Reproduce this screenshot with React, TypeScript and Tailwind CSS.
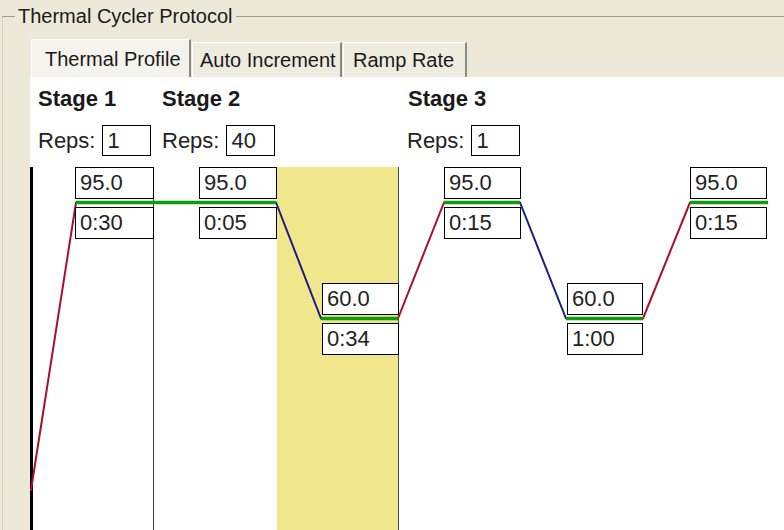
import React from "react";

const GREEN = "#0E9C0E";
const RED = "#A8102C";
const BLUE = "#1C1C86";

type BoxProps = { left: number; top: number; width: number; text: string };

function ValBox({ left, top, width, text }: BoxProps) {
  return (
    <div
      className="absolute h-[32px] border border-black bg-white pl-[4px] text-[22px] leading-[30px] text-[#222]"
      style={{ left, top, width }}
    >
      {text}
    </div>
  );
}

function RepsRow({ value }: { value: string }) {
  return (
    <div className="mt-[14px] flex h-[31px] items-center gap-[7px]">
      <span className="text-[22px] leading-[31px] text-[#222]">Reps:</span>
      <div className="h-[31px] w-[49px] border border-black bg-white pl-[4px] text-[22px] leading-[29px] text-[#222]">
        {value}
      </div>
    </div>
  );
}

export default function App() {
  const upper = 35.5;
  const lower = 151.5;
  return (
    <div className="h-[530px] w-[784px] overflow-hidden bg-[#ECE9D8] font-['Liberation_Sans',Arial,sans-serif] text-[#1a1a1a]">
      {/* group box header */}
      <div className="flex h-[32px] items-start">
        <div className="mt-[16px] ml-[2px] h-[16px] w-[13px] border-t border-l border-t-[#9E9D92] border-l-[#CFCDC0]" />
        <span className="px-[3px] text-[20px] leading-[32px] text-[#1a1a1a]">Thermal Cycler Protocol</span>
        <div className="mt-[16px] flex-1 border-t border-t-[#9E9D92]" />
      </div>

      {/* group box body */}
      <div className="ml-[2px] flex h-[498px] flex-col border-l border-l-[#CFCDC0] pt-[7px] pl-[27px]">
        {/* tabs */}
        <div className="ml-[1px] flex h-[38px] items-end">
          <div className="flex h-[38px] w-[160px] items-center border-t border-l border-t-white border-l-white border-r-2 border-r-[#8A8A84] bg-[#F4F3EC] pl-[13px] text-[20px]">
            Thermal Profile
          </div>
          <div className="ml-[1px] flex h-[35px] w-[150px] items-center border-t border-l border-t-white border-l-white border-r-2 border-r-[#8A8A84] bg-[#EEEBDF] pl-[7px] text-[20px]">
            Auto Increment
          </div>
          <div className="ml-[1px] flex h-[35px] w-[124px] items-center border-t border-l border-t-white border-l-white border-r-2 border-r-[#8A8A84] bg-[#EEEBDF] pl-[9px] text-[20px]">
            Ramp Rate
          </div>
        </div>

        {/* panel */}
        <div className="flex flex-1 flex-col bg-white">
          {/* stage headers */}
          <div className="flex h-[90px] pt-[10px]">
            <div className="w-[123px] pl-[8px]">
              <div className="h-[24px] text-[22px] font-bold leading-[24px]">Stage 1</div>
              <RepsRow value="1" />
            </div>
            <div className="w-[246px] pl-[9px]">
              <div className="h-[24px] text-[22px] font-bold leading-[24px]">Stage 2</div>
              <RepsRow value="40" />
            </div>
            <div className="flex-1 pl-[8px]">
              <div className="h-[24px] pl-[1px] text-[22px] font-bold leading-[24px]">Stage 3</div>
              <RepsRow value="1" />
            </div>
          </div>

          {/* chart */}
          <div className="relative flex flex-1">
            <div className="w-[124px] border-l-[3px] border-r border-l-black border-r-[#3C3C3C]" />
            <div className="flex w-[245px]">
              <div className="w-[123px]" />
              <div className="w-[122px] border-r border-r-[#4A4A4A] bg-[#F0E68C]" />
            </div>
            <div className="flex-1" />

            <svg className="absolute inset-0" width="754" height="363">
              <g strokeWidth="2" fill="none" strokeLinecap="round">
                <line x1="1" y1="323" x2="46" y2={upper} stroke={RED} />
                <line x1="246" y1={upper} x2="291" y2={lower} stroke={BLUE} />
                <line x1="368" y1={lower} x2="414" y2={upper} stroke={RED} />
                <line x1="490" y1={upper} x2="536" y2={lower} stroke={BLUE} />
                <line x1="613" y1={lower} x2="660" y2={upper} stroke={RED} />
              </g>
              <g strokeWidth="3.5" fill="none">
                <line x1="46" y1={upper} x2="246" y2={upper} stroke={GREEN} />
                <line x1="291" y1={lower} x2="368" y2={lower} stroke={GREEN} />
                <line x1="414" y1={upper} x2="490" y2={upper} stroke={GREEN} />
                <line x1="536" y1={lower} x2="613" y2={lower} stroke={GREEN} />
                <line x1="660" y1={upper} x2="738" y2={upper} stroke={GREEN} />
              </g>
            </svg>

            <ValBox left={45} top={0} width={79} text="95.0" />
            <ValBox left={45} top={40} width={79} text="0:30" />
            <ValBox left={169} top={0} width={78} text="95.0" />
            <ValBox left={169} top={40} width={78} text="0:05" />
            <ValBox left={292} top={116} width={77} text="60.0" />
            <ValBox left={292} top={156} width={77} text="0:34" />
            <ValBox left={414} top={0} width={77} text="95.0" />
            <ValBox left={414} top={40} width={77} text="0:15" />
            <ValBox left={537} top={116} width={76} text="60.0" />
            <ValBox left={537} top={156} width={76} text="1:00" />
            <ValBox left={660} top={0} width={77} text="95.0" />
            <ValBox left={660} top={40} width={77} text="0:15" />
          </div>
        </div>
      </div>
    </div>
  );
}
